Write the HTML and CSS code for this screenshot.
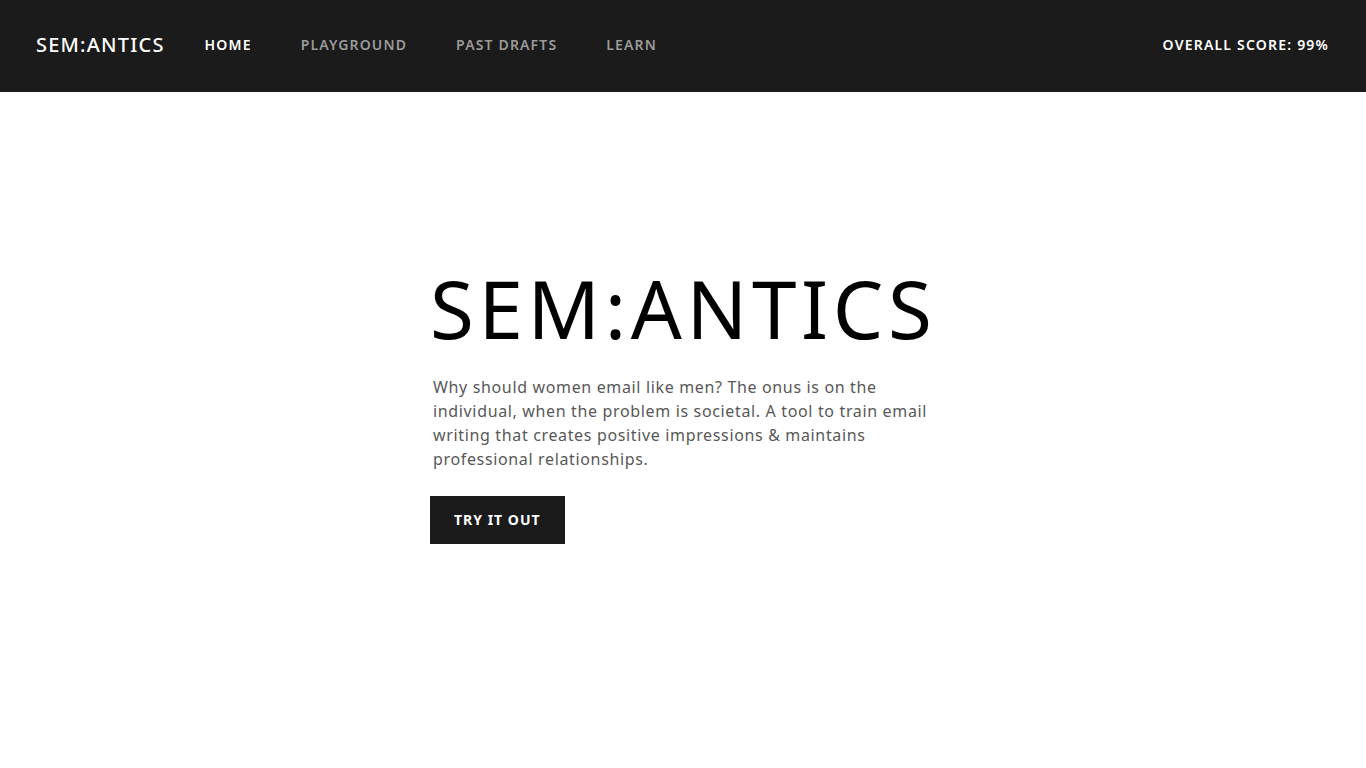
FILE: index.html
```html
<!DOCTYPE html>
<html lang="en">
<head>
<meta charset="utf-8">
<title>SEM:ANTICS</title>
<link rel="stylesheet" href="styles.css">
</head>
<body>
<header class="navbar">
  <div class="nav-left">
    <a class="brand" href="#">SEM:ANTICS</a>
    <nav class="nav-links">
      <a class="nav-link active" href="#">HOME</a>
      <a class="nav-link" href="#">PLAYGROUND</a>
      <a class="nav-link" href="#">PAST DRAFTS</a>
      <a class="nav-link" href="#">LEARN</a>
    </nav>
  </div>
  <div class="score">OVERALL SCORE: 99%</div>
</header>
<main class="hero">
  <div class="hero-inner">
    <h1 class="hero-title">SEM:ANTICS</h1>
    <p class="hero-text">Why should women email like men? The onus is on the individual, when the problem is societal. A tool to train email writing that creates positive impressions &amp; maintains professional relationships.</p>
    <a class="btn" href="#">TRY IT OUT</a>
  </div>
</main>
</body>
</html>
```
FILE: styles.css
```css
* { box-sizing: border-box; }
html, body { margin: 0; padding: 0; }
body {
  font-family: "Noto Sans", "Open Sans", sans-serif;
  background: #ffffff;
  color: #000;
}
a { text-decoration: none; }
.navbar {
  height: 92px;
  background: #1b1b1b;
  display: flex;
  align-items: center;
  justify-content: space-between;
  padding: 0 37px 4px 36px;
}
.nav-left {
  display: flex;
  align-items: center;
}
.brand {
  color: #fff;
  font-size: 20px;
  font-weight: 500;
  letter-spacing: 1.2px;
  margin-right: 40px;
}
.nav-links {
  display: flex;
  gap: 49px;
}
.nav-link {
  color: #9a9a9a;
  font-size: 14px;
  font-weight: 600;
  letter-spacing: 1.15px;
}
.nav-link.active { color: #fff; }
.score {
  color: #fff;
  font-size: 14px;
  font-weight: 600;
  letter-spacing: 1.2px;
}
.hero {
  height: calc(100vh - 92px);
  display: flex;
  justify-content: center;
  align-items: center;
}
.hero-inner {
  width: 506px;
  margin-top: -56px;
}
.hero-title {
  margin: 0;
  font-size: 80px;
  font-weight: 400;
  line-height: 96px;
  letter-spacing: 4.6px;
  color: #000;
}
.hero-text {
  margin: 19px 0 25px 3px;
  font-size: 16px;
  line-height: 24px;
  color: #585858;
  letter-spacing: 0.65px;
}
.btn {
  display: inline-block;
  background: #1b1b1b;
  color: #fff;
  font-size: 14px;
  font-weight: 700;
  letter-spacing: 1px;
  line-height: 48px;
  height: 48px;
  padding: 0 24px;
}
```
